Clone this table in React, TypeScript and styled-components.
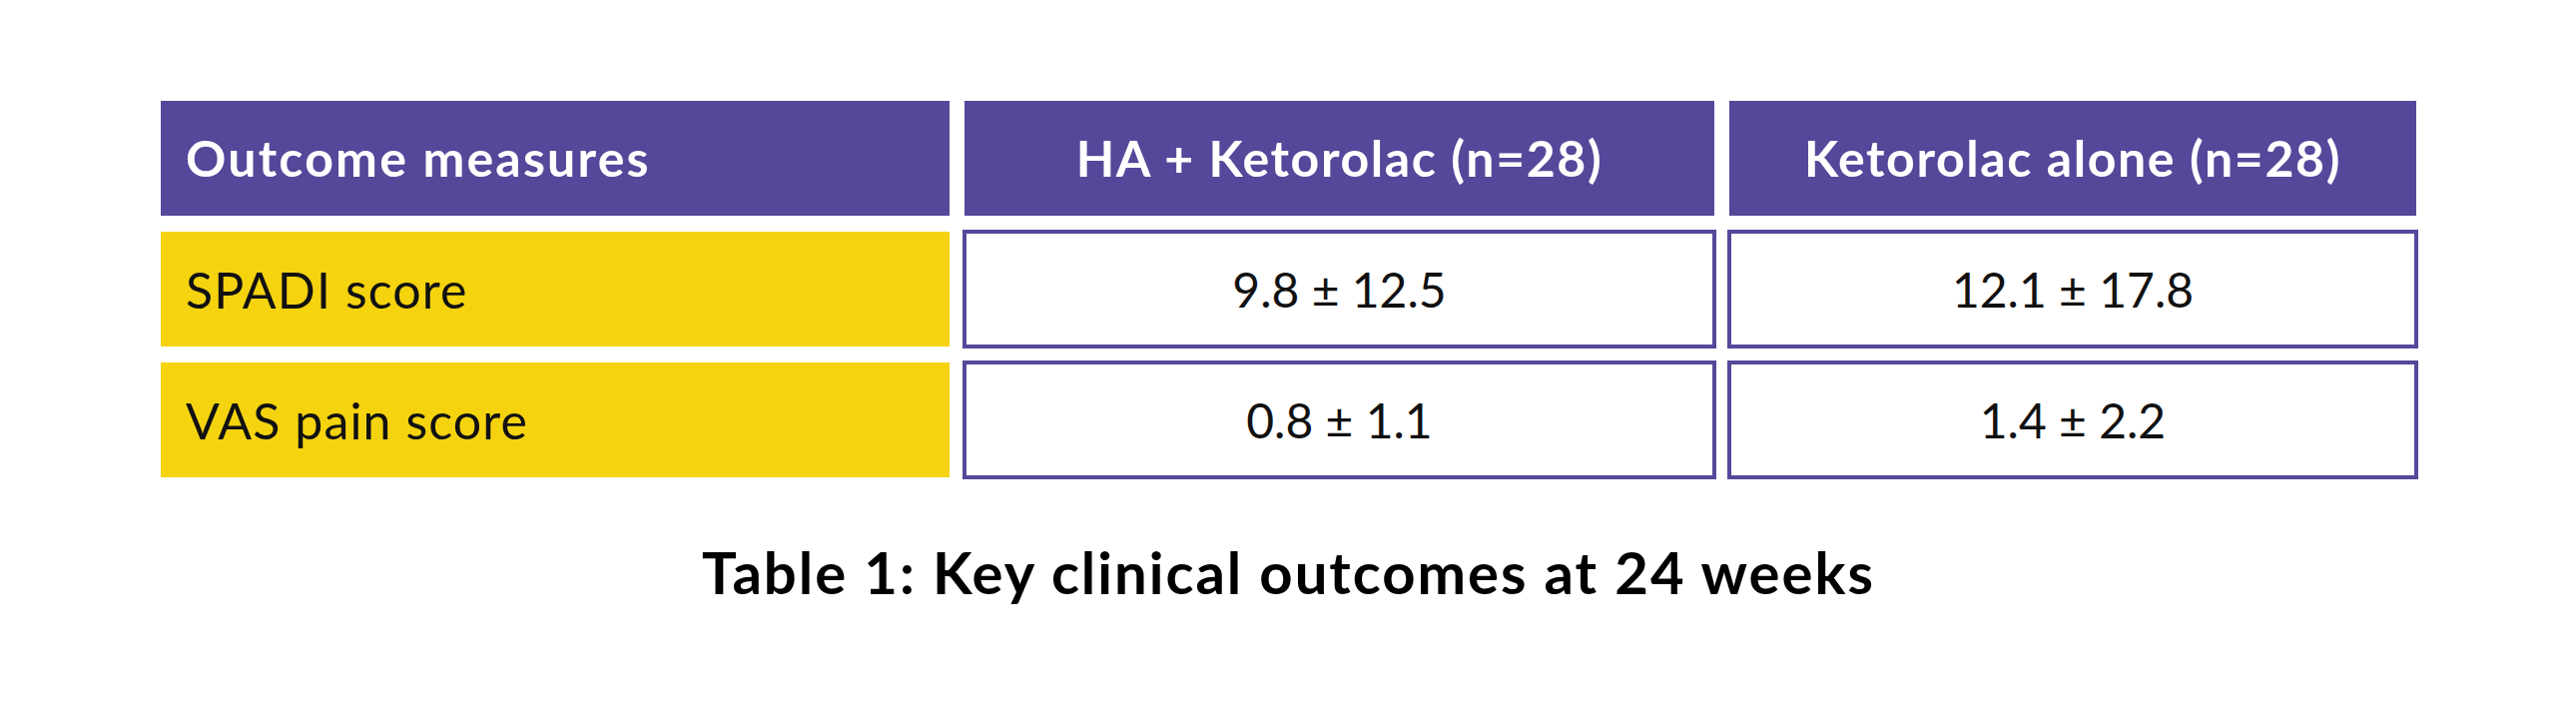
import { Fragment } from "react";
import styled, { createGlobalStyle } from "styled-components";

const purple = "#54489a";
const yellow = "#f5d30f";

const GlobalStyle = createGlobalStyle`
  html, body {
    margin: 0;
    padding: 0;
    background: #ffffff;
  }
  body {
    font-family: "Lato", "Liberation Sans", sans-serif;
  }
`;

const Page = styled.div`
  width: 2580px;
  height: 706px;
  box-sizing: border-box;
  padding: 101px 160px 0 161px;
  display: flex;
  flex-direction: column;
  align-items: center;
`;

const Table = styled.div`
  display: grid;
  grid-template-columns: 790px 751px 688px;
  grid-auto-rows: 115px;
  column-gap: 15px;
  row-gap: 16px;
`;

const HeadCell = styled.div<{ $align: "left" | "center" }>`
  background: ${purple};
  color: #ffffff;
  font-weight: 700;
  font-size: 50px;
  letter-spacing: ${({ $align }) => ($align === "left" ? "2.2px" : "1.6px")};
  display: flex;
  align-items: center;
  justify-content: ${({ $align }) => ($align === "left" ? "flex-start" : "center")};
  padding: 0 25px 2px;
`;

const LabelCell = styled.div`
  background: ${yellow};
  color: #111111;
  font-size: 50px;
  font-weight: 400;
  letter-spacing: 1.1px;
  display: flex;
  align-items: center;
  padding: 0 25px;
`;

const ValueCell = styled.div`
  margin: -2px;
  border: 4px solid ${purple};
  background: #ffffff;
  color: #111111;
  font-size: 48px;
  font-weight: 400;
  display: flex;
  align-items: center;
  justify-content: center;
`;

const Caption = styled.div`
  margin-top: 60px;
  font-size: 58px;
  font-weight: 700;
  letter-spacing: 2px;
  color: #000000;
`;

const headers = ["Outcome measures", "HA + Ketorolac (n=28)", "Ketorolac alone (n=28)"];

const rows = [
  { label: "SPADI score", values: ["9.8 ± 12.5", "12.1 ± 17.8"] },
  { label: "VAS pain score", values: ["0.8 ± 1.1", "1.4 ± 2.2"] },
];

export default function App() {
  return (
    <>
      <GlobalStyle />
      <Page>
        <Table>
          {headers.map((h, i) => (
            <HeadCell key={h} $align={i === 0 ? "left" : "center"}>
              {h}
            </HeadCell>
          ))}
          {rows.map((r) => (
            <Fragment key={r.label}>
              <LabelCell>{r.label}</LabelCell>
              {r.values.map((v) => (
                <ValueCell key={v}>{v}</ValueCell>
              ))}
            </Fragment>
          ))}
        </Table>
        <Caption>Table 1: Key clinical outcomes at 24 weeks</Caption>
      </Page>
    </>
  );
}
